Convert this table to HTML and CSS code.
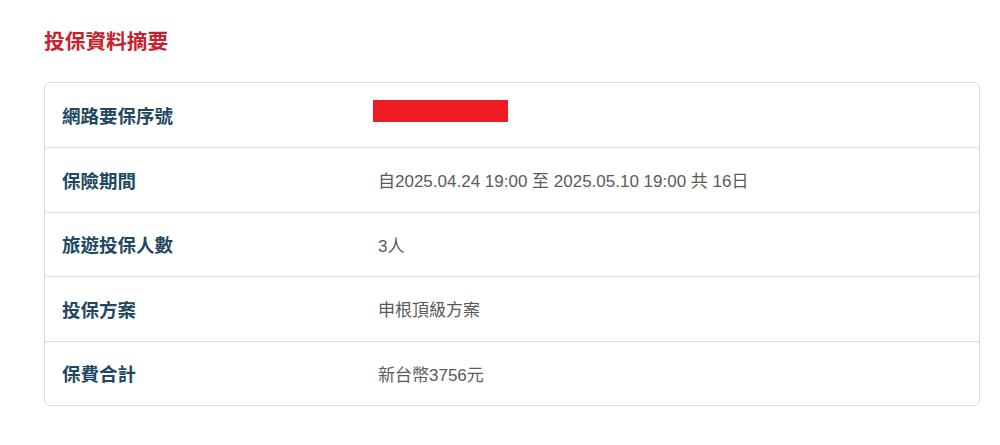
FILE: index.html
```html
<!DOCTYPE html>
<html lang="zh-Hant">
<head>
<meta charset="utf-8">
<link rel="stylesheet" href="styles.css">
</head>
<body>
<div class="page">
  <h2 class="title">投保資料摘要</h2>
  <div class="summary">
    <div class="row">
      <div class="label">網路要保序號</div>
      <div class="value"><span class="redact"></span></div>
    </div>
    <div class="row">
      <div class="label">保險期間</div>
      <div class="value">自2025.04.24 19:00 至 2025.05.10 19:00 共 16日</div>
    </div>
    <div class="row">
      <div class="label">旅遊投保人數</div>
      <div class="value">3人</div>
    </div>
    <div class="row">
      <div class="label">投保方案</div>
      <div class="value">申根頂級方案</div>
    </div>
    <div class="row">
      <div class="label">保費合計</div>
      <div class="value">新台幣3756元</div>
    </div>
  </div>
</div>
</body>
</html>
```
FILE: styles.css
```css
html, body {
  margin: 0;
  padding: 0;
  background: #fff;
}
body {
  font-family: "Liberation Sans", "Noto Sans CJK TC", sans-serif;
}
.page {
  padding: 30px 20px 0 44px;
}
.title {
  margin: 0 0 28px 0;
  font-size: 20.7px;
  line-height: 24px;
  font-weight: bold;
  color: #c8202c;
}
.summary {
  border: 1px solid #dcdcdc;
  border-radius: 6px;
}
.row {
  display: grid;
  grid-template-columns: 316px 1fr;
  align-items: center;
  height: 63.5px;
  padding-left: 17px;
  border-top: 1px solid #dcdcdc;
}
.row:first-child {
  border-top: none;
  height: 64px;
}
.label {
  font-size: 18.5px;
  font-weight: bold;
  color: #21485f;
}
.value {
  font-size: 17px;
  color: #5a5a5a;
}
.redact {
  display: block;
  width: 135px;
  height: 22px;
  margin: -4.5px 0 4.5px -5px;
  background: #ee1c25;
}
```
